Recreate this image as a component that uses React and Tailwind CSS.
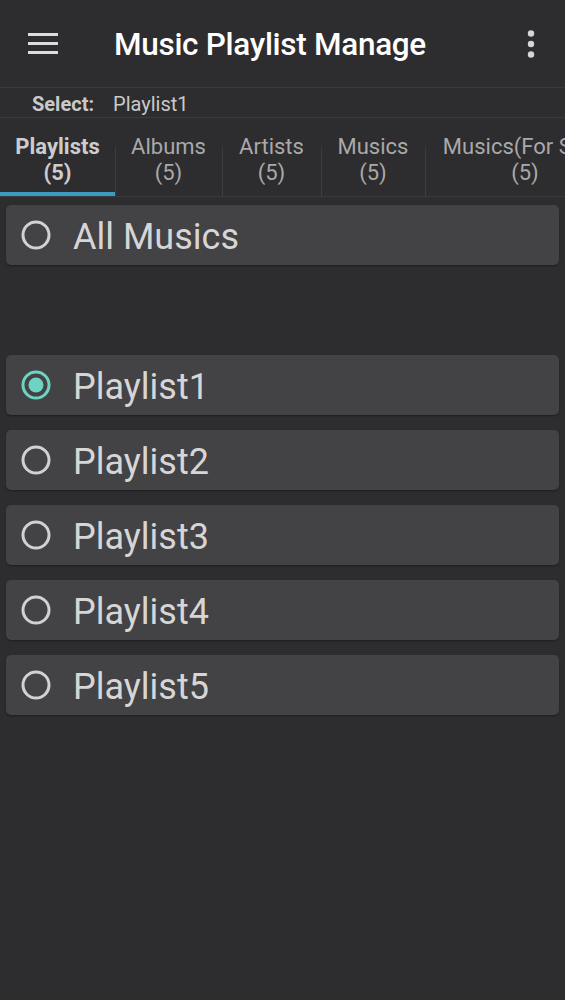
const tabs = [
  { label: 'Playlists', w: 'w-[115px]', active: true },
  { label: 'Albums', w: 'w-[107px]' },
  { label: 'Artists', w: 'w-[99px]' },
  { label: 'Musics', w: 'w-[104px]' },
  { label: 'Musics(For Sort)', w: 'w-[200px]' },
]

const playlists = ['Playlist1', 'Playlist2', 'Playlist3', 'Playlist4', 'Playlist5']

function Radio({ checked }) {
  return (
    <svg width="32" height="32" viewBox="0 0 32 32" className="shrink-0">
      <circle cx="16" cy="16" r="13" fill="none" strokeWidth="3" stroke={checked ? '#6fd3c3' : '#d2d2d2'} />
      {checked && <circle cx="16" cy="16" r="7.5" fill="#6fd3c3" />}
    </svg>
  )
}

function Row({ label, checked }) {
  return (
    <div className="mx-[6px] h-[60px] rounded-[5px] bg-[#434245] shadow-[0_1px_2px_rgba(0,0,0,0.35)] flex items-center pl-[14px] gap-[21px]">
      <Radio checked={checked} />
      <span className="text-[36px] text-[#d6d6d6] leading-none pt-[3px]">{label}</span>
    </div>
  )
}

export default function App() {
  return (
    <div className="w-[565px] h-[1000px] bg-[#2d2c2f] overflow-hidden font-['Roboto','Liberation_Sans',sans-serif]">
      {/* toolbar */}
      <div className="h-[88px] flex items-center border-b border-[#3a393c]">
        <div className="w-[114px] pl-[28px] pt-[1px]">
          <svg width="30" height="22" viewBox="0 0 30 22">
            <rect x="0" y="0" width="30" height="3" fill="#dcdcdc" />
            <rect x="0" y="9" width="30" height="3" fill="#dcdcdc" />
            <rect x="0" y="18" width="30" height="3" fill="#dcdcdc" />
          </svg>
        </div>
        <h1 className="flex-1 text-[31.5px] font-medium text-white tracking-[-0.3px] pt-[2px]">Music Playlist Manage</h1>
        <div className="pr-[30px]">
          <svg width="8" height="28" viewBox="0 0 8 28">
            <circle cx="4" cy="3.5" r="3.2" fill="#d6d6d6" />
            <circle cx="4" cy="14" r="3.2" fill="#d6d6d6" />
            <circle cx="4" cy="24.5" r="3.2" fill="#d6d6d6" />
          </svg>
        </div>
      </div>

      {/* selection */}
      <div className="h-[30px] flex items-center pl-[32px] gap-[19px] border-b border-[#3a393c] text-[20px] text-[#c9c9c9] pt-[3px]">
        <span className="font-bold">Select:</span>
        <span>Playlist1</span>
      </div>

      {/* tabs */}
      <div className="h-[79px] flex border-b border-[#3a393c] overflow-hidden">
        {tabs.map((t, i) => (
          <div key={t.label} className={`${t.w} shrink-0 relative flex flex-col items-center pt-[16px] text-[22px] leading-[26px] ${t.active ? 'font-bold text-[#cccccc]' : 'text-[#a9a9a9]'}`}>
            {i > 0 && <div className="absolute left-0 top-[29px] bottom-0 w-px bg-[#3d3c3f]" />}
            <span className="whitespace-nowrap">{t.label}</span>
            <span>(5)</span>
            {t.active && <div className="absolute left-0 right-0 bottom-0 h-[4px] bg-[#3a9cc0]" />}
          </div>
        ))}
      </div>

      {/* list */}
      <div className="pt-[8px] flex flex-col gap-[15px]">
        <Row label="All Musics" />
        <div className="h-[60px]" />
        {playlists.map((p, i) => (
          <Row key={p} label={p} checked={i === 0} />
        ))}
      </div>
    </div>
  )
}
